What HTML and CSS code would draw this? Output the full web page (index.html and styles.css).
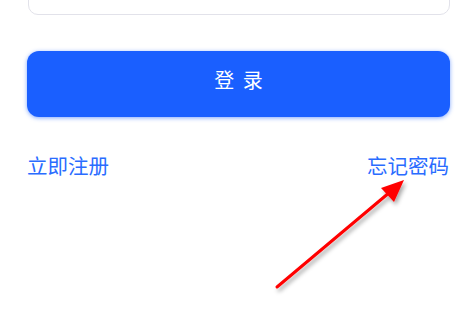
FILE: index.html
```html
<!DOCTYPE html>
<html lang="zh">
<head>
<meta charset="utf-8">
<link rel="stylesheet" href="styles.css">
</head>
<body>
<div class="page">
  <div class="input-box"></div>
  <button class="login-btn">登 录</button>
  <div class="links">
    <a class="link">立即注册</a>
    <a class="link">忘记密码</a>
  </div>
</div>
<svg class="arrow" width="464" height="318" viewBox="0 0 464 318">
  <defs>
    <filter id="sh" x="-20%" y="-20%" width="140%" height="140%">
      <feDropShadow dx="2" dy="3" stdDeviation="2" flood-color="#000" flood-opacity="0.35"/>
    </filter>
  </defs>
  <g filter="url(#sh)">
    <line x1="277" y1="287" x2="390" y2="192" stroke="#ff0000" stroke-width="3" stroke-linecap="round"/>
    <polygon points="404,180 381,188 394,202" fill="#ff0000"/>
  </g>
</svg>
</body>
</html>
```
FILE: styles.css
```css
html, body {
  margin: 0;
  padding: 0;
  background: #ffffff;
  overflow: hidden;
}
body {
  width: 464px;
  height: 318px;
  position: relative;
  font-family: "Noto Sans CJK SC", "Noto Sans", sans-serif;
}
.page {
  padding: 0 14px 0 27px;
  display: flex;
  flex-direction: column;
}
.input-box {
  margin-top: -40px;
  height: 53px;
  border: 1px solid #e2e2ea;
  border-radius: 10px;
  margin-left: 1px;
}
.login-btn {
  margin-top: 36px;
  height: 66px;
  border: none;
  border-radius: 12px;
  background: #1a5fff;
  color: #ffffff;
  font-family: "Noto Sans CJK SC", sans-serif;
  font-size: 20px;
  box-shadow: 0 1px 4px rgba(26, 95, 255, 0.55);
  padding: 0 0 10px 0;
  word-spacing: 4px;
}
.links {
  margin-top: 36px;
  display: flex;
  justify-content: space-between;
  padding-right: 1px;
}
.link {
  font-size: 20.5px;
  line-height: 24px;
  color: #2a6cff;
  text-decoration: none;
}
.arrow {
  position: absolute;
  left: 0;
  top: 0;
  pointer-events: none;
}
```
